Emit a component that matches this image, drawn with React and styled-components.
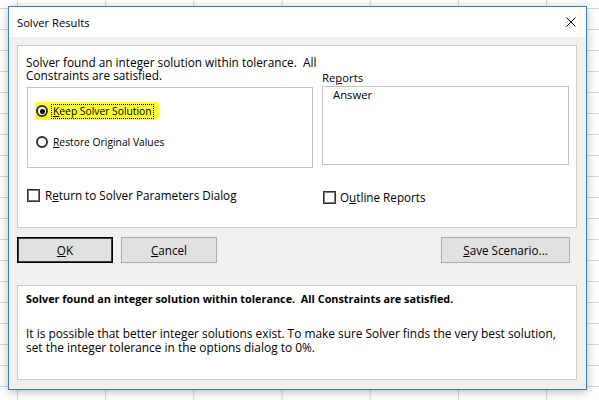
import React from "react";
import styled, { createGlobalStyle } from "styled-components";

const GlobalStyle = createGlobalStyle`
  html, body { margin: 0; padding: 0; }
  body {
    width: 599px;
    height: 400px;
    overflow: hidden;
    font-family: "Open Sans", "Noto Sans", sans-serif;
    color: #000;
  }
  * { box-sizing: border-box; }
`;

const Desktop = styled.div`
  width: 599px;
  height: 400px;
  padding: 6px 0 0 8px;
  background-color: #ffffff;
  background-image:
    linear-gradient(to right, #d6d6d6 1px, transparent 1px),
    linear-gradient(to bottom, #d6d6d6 1px, transparent 1px);
  background-size: 88.2px 100%, 100% 21px;
  background-position: 17px 0, 0 8px;
`;

const Dialog = styled.div`
  width: 579px;
  height: 384px;
  border: 1px solid #3a7cc1;
  background: #f0f0f0;
  display: flex;
  flex-direction: column;
  box-shadow: 0 2px 9px rgba(0, 0, 0, 0.28);
`;

const TitleBar = styled.div`
  height: 30px;
  flex: none;
  background: #ffffff;
  display: flex;
  align-items: center;
  justify-content: space-between;
  padding: 0 10px 0 8px;
`;

const TitleText = styled.span`
  font-size: 11.2px;
  line-height: 15px;
`;

const CloseIcon = styled.svg`
  display: block;
  width: 10px;
  height: 10px;
`;

const Body = styled.div`
  display: flex;
  flex-direction: column;
  padding: 8px 9px 0 8px;
`;

const Panel = styled.div`
  background: #ffffff;
  border: 1px solid #cccccc;
  height: ${(p) => p.$height}px;
`;

const TopGrid = styled.div`
  display: grid;
  grid-template-columns: 286px 247px;
  column-gap: 9px;
  padding-left: 9px;
`;

const Column = styled.div`
  display: flex;
  flex-direction: column;
  align-items: flex-start;
`;

const Message = styled.div`
  margin-top: 10px;
  margin-left: -1px;
  display: flex;
  flex-direction: column;
`;

const MessageLine = styled.div`
  height: 13px;
  font-size: 11.8px;
  line-height: 13px;
  white-space: pre;
`;

const GroupBox = styled.div`
  width: 286px;
  height: 81px;
  margin-top: 5px;
  border: 1px solid #c3c3c3;
  padding: 14px 0 0 7px;
  display: flex;
  flex-direction: column;
  align-items: flex-start;
  gap: 13px;
`;

const RadioRow = styled.div`
  display: flex;
  align-items: center;
  height: 18px;
  padding: 0 5px 0 1px;
  border-radius: 3px;
  background: ${(p) => (p.$highlight ? "#fcfc2c" : "transparent")};
`;

const Radio = styled.span`
  position: relative;
  width: 12px;
  height: 12px;
  flex: none;
  border-radius: 50%;
  border: 2px solid #333333;
  background: #ffffff;
  &::after {
    content: "";
    display: ${(p) => (p.$checked ? "block" : "none")};
    position: absolute;
    left: 1.5px;
    top: 1.5px;
    width: 5px;
    height: 5px;
    border-radius: 50%;
    background: #000000;
  }
`;

const RadioLabel = styled.span`
  margin-left: 3px;
  padding: 0 1px;
  font-size: 10.3px;
  line-height: 13px;
  white-space: nowrap;
  border: 1px dotted ${(p) => (p.$focused ? "#000000" : "transparent")};
`;

const CheckRow = styled.div`
  display: flex;
  align-items: center;
  margin-top: ${(p) => p.$top}px;
  margin-left: ${(p) => p.$left || 0}px;
`;

const CheckBox = styled.span`
  width: 13px;
  height: 13px;
  flex: none;
  border: 1px solid #333333;
  box-shadow: inset 0 0 0 1px #7a7a7a;
  background: #ffffff;
`;

const CheckLabel = styled.span`
  margin-left: ${(p) => p.$gap}px;
  font-size: 11.7px;
  line-height: 13px;
  white-space: nowrap;
`;

const ReportsLabel = styled.div`
  margin-top: 25px;
  font-size: 11.3px;
  line-height: 13px;
`;

const ListBox = styled.div`
  width: 247px;
  height: 79px;
  margin-top: 2px;
  border: 1px solid #c3c3c3;
  padding: 1px 10px;
  font-size: 11.3px;
  line-height: 13px;
`;

const ButtonRow = styled.div`
  display: flex;
  align-items: flex-start;
  gap: 8px;
  margin-top: 9px;
  padding-right: 7px;
`;

const Button = styled.div`
  width: ${(p) => p.$width}px;
  height: 26px;
  margin-left: ${(p) => (p.$push ? "auto" : "0")};
  display: flex;
  align-items: center;
  justify-content: center;
  background: #e1e1e1;
  border: 1px solid ${(p) => (p.$default ? "#000000" : "#adadad")};
  box-shadow: ${(p) => (p.$default ? "inset 0 0 0 1px #3a3a3a" : "none")};
  font-size: 11.7px;
  line-height: 14px;
`;

const InfoPanel = styled(Panel)`
  margin-top: 22px;
  padding: 6px 8px;
`;

const InfoTitle = styled.div`
  font-weight: 700;
  font-size: 10.85px;
  line-height: 14px;
  height: 14px;
  white-space: pre;
`;

const InfoText = styled.div`
  margin-top: 20px;
  display: flex;
  flex-direction: column;
`;

const InfoLine = styled.div`
  height: 14px;
  font-size: 11.9px;
  line-height: 14px;
  white-space: nowrap;
`;

export default function App() {
  return (
    <>
      <GlobalStyle />
      <Desktop>
        <Dialog>
          <TitleBar>
            <TitleText>Solver Results</TitleText>
            <CloseIcon viewBox="0 0 10 10">
              <path d="M0.5 0.5 L9.5 9.5 M9.5 0.5 L0.5 9.5" stroke="#000" strokeWidth="1" fill="none" />
            </CloseIcon>
          </TitleBar>
          <Body>
            <Panel $height={183}>
              <TopGrid>
                <Column>
                  <Message>
                    <MessageLine>{"Solver found an integer solution within tolerance.  All"}</MessageLine>
                    <MessageLine>Constraints are satisfied.</MessageLine>
                  </Message>
                  <GroupBox>
                    <RadioRow $highlight>
                      <Radio $checked />
                      <RadioLabel $focused>
                        <u>K</u>eep Solver Solution
                      </RadioLabel>
                    </RadioRow>
                    <RadioRow>
                      <Radio />
                      <RadioLabel>
                        <u>R</u>estore Original Values
                      </RadioLabel>
                    </RadioRow>
                  </GroupBox>
                  <CheckRow $top={21}>
                    <CheckBox />
                    <CheckLabel $gap={5}>
                      R<u>e</u>turn to Solver Parameters Dialog
                    </CheckLabel>
                  </CheckRow>
                </Column>
                <Column>
                  <ReportsLabel>
                    Re<u>p</u>orts
                  </ReportsLabel>
                  <ListBox>Answer</ListBox>
                  <CheckRow $top={26} $left={1}>
                    <CheckBox />
                    <CheckLabel $gap={4}>
                      O<u>u</u>tline Reports
                    </CheckLabel>
                  </CheckRow>
                </Column>
              </TopGrid>
            </Panel>
            <ButtonRow>
              <Button $width={96} $default>
                <span>
                  <u>O</u>K
                </span>
              </Button>
              <Button $width={96}>
                <span>
                  <u>C</u>ancel
                </span>
              </Button>
              <Button $width={129} $push>
                <span>
                  <u>S</u>ave Scenario...
                </span>
              </Button>
            </ButtonRow>
            <InfoPanel $height={95}>
              <InfoTitle>
                {"Solver found an integer solution within tolerance.  All Constraints are satisfied."}
              </InfoTitle>
              <InfoText>
                <InfoLine>
                  It is possible that better integer solutions exist. To make sure Solver finds the very best solution,
                </InfoLine>
                <InfoLine>set the integer tolerance in the options dialog to 0%.</InfoLine>
              </InfoText>
            </InfoPanel>
          </Body>
        </Dialog>
      </Desktop>
    </>
  );
}
